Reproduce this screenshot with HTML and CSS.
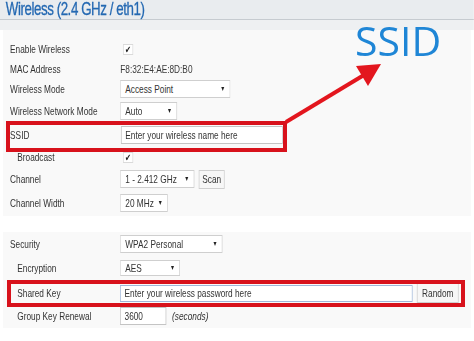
FILE: index.html
```html
<!DOCTYPE html>
<html lang="en">
<head>
    <meta charset="UTF-8">
    <meta name="viewport" content="width=device-width, initial-scale=1.0">
    <title>Wireless Settings</title>
    <link rel="stylesheet" href="styles.css">
</head>
<body>
<div class="page">

    <!-- The router page is shown squeezed sideways, as in the capture -->
    <div class="sheet">
        <h1 class="title">Wireless (2.4 GHz / eth1)</h1>
        <div class="subbar"></div>

        <!-- Basic settings -->
        <section class="panel panel-basic">
            <div class="row r-enable">
                <span class="label">Enable Wireless</span>
                <span class="check">&#10004;</span>
            </div>
            <div class="row r-mac">
                <span class="label">MAC Address</span>
                <span class="value">F8:32:E4:AE:8D:B0</span>
            </div>
            <div class="row r-mode">
                <span class="label">Wireless Mode</span>
                <div class="select w-mode">Access Point<span class="caret">&#9660;</span></div>
            </div>
            <div class="row r-netmode">
                <span class="label">Wireless Network Mode</span>
                <div class="select w-netmode">Auto<span class="caret">&#9660;</span></div>
            </div>
            <div class="row r-ssid">
                <span class="label">SSID</span>
                <input class="field w-ssid" type="text" placeholder="Enter your wireless name here">
            </div>
            <div class="row r-broadcast">
                <span class="label sub">Broadcast</span>
                <span class="check">&#10004;</span>
            </div>
            <div class="row r-channel">
                <span class="label">Channel</span>
                <div class="select w-channel">1 - 2.412 GHz<span class="caret">&#9660;</span></div>
                <button class="btn btn-scan">Scan</button>
            </div>
            <div class="row r-width">
                <span class="label">Channel Width</span>
                <div class="select w-width">20 MHz<span class="caret">&#9660;</span></div>
            </div>
        </section>

        <!-- Security settings -->
        <section class="panel panel-security">
            <div class="row r-security">
                <span class="label">Security</span>
                <div class="select w-security">WPA2 Personal<span class="caret">&#9660;</span></div>
            </div>
            <div class="row r-encryption">
                <span class="label sub">Encryption</span>
                <div class="select w-aes">AES<span class="caret">&#9660;</span></div>
            </div>
            <div class="row r-key">
                <span class="label sub">Shared Key</span>
                <input class="field field-focus w-key" type="text" placeholder="Enter your wireless password here">
                <button class="btn btn-random">Random</button>
            </div>
            <div class="row r-renewal">
                <span class="label sub">Group Key Renewal</span>
                <input class="field w-renewal" type="text" value="3600">
                <span class="unit">(seconds)</span>
            </div>
        </section>
    </div>

    <!-- Annotations drawn over the capture -->
    <div class="mark mark-ssid"></div>
    <div class="mark mark-key"></div>
    <svg class="arrow" width="474" height="341" viewBox="0 0 474 341">
        <line x1="286" y1="122" x2="364" y2="75" stroke="#e3161e" stroke-width="4"/>
        <polygon points="381,64 356,66 368,86" fill="#e3161e"/>
    </svg>
    <div class="callout">SSID</div>

</div>
</body>
</html>
```

FILE: styles.css
```css
body {
    margin: 0;
    background: #ffffff;
    font-family: "Liberation Sans", Arial, sans-serif;
    color: #333;
}
.page {
    position: relative;
    width: 474px;
    height: 341px;
    overflow: hidden;
}
.sheet {
    width: 658px;
    transform: scaleX(0.72);
    transform-origin: 0 0;
}
.title {
    margin: 0;
    height: 20px;
    padding-left: 8px;
    background: #e9ecef;
    border-bottom: 1px solid #c6cbd0;
    box-sizing: border-box;
    color: #2368b2;
    font-size: 18.5px;
    font-weight: normal;
    letter-spacing: -0.6px;
    line-height: 18px;
    -webkit-text-stroke: 0.3px #2368b2;
}
.subbar {
    height: 10px;
    background: #eef0f2;
}
.panel {
    margin-left: 4px;
    width: 650px;
    background: #f9f9f9;
}
.panel-basic {
    padding: 9px 0 1px;
}
.panel-security {
    margin-top: 16px;
    padding: 1px 0 1px;
}
.row {
    display: flex;
    align-items: center;
    font-size: 11.5px;
}
.label {
    width: 153px;
    padding-left: 10px;
    flex-shrink: 0;
}
.label.sub {
    padding-left: 20px;
    width: 143px;
}
.r-enable { height: 20px; }
.r-mac { height: 19px; }
.r-mode { height: 21px; }
.r-netmode { height: 24px; }
.r-ssid { height: 24px; }
.r-broadcast { height: 20px; }
.r-channel { height: 24px; }
.r-width { height: 24px; }
.r-security { height: 22px; }
.r-encryption { height: 26px; }
.r-key { height: 24px; }
.r-renewal { height: 22px; }

.check {
    width: 12px;
    height: 9px;
    margin-left: 4px;
    border: 1px solid #dadada;
    background: #fff;
    font-size: 10px;
    line-height: 9px;
    text-align: center;
    color: #222;
}
.value {
    color: #3a3a3a;
}
.select {
    position: relative;
    height: 18px;
    box-sizing: border-box;
    padding-left: 6px;
    border: 1px solid #cfcfcf;
    background: #fff;
    line-height: 16px;
    color: #333;
}
.caret {
    position: absolute;
    right: 6px;
    top: 0;
    font-size: 7px;
    color: #222;
}
.w-mode { width: 153px; }
.w-netmode { width: 79px; }
.w-channel { width: 103px; }
.w-width { width: 66px; }
.w-security { width: 142px; }
.w-aes { width: 83px; height: 16px; line-height: 14px; }

.field {
    height: 18px;
    box-sizing: border-box;
    padding: 0 5px;
    border: 1px solid #c4c4c4;
    background: #fff;
    font-family: inherit;
    font-size: 11.5px;
    color: #333;
    outline: none;
}
.field::placeholder {
    color: #333;
}
.field-focus {
    border-color: #9fb6d8;
}
.w-ssid { width: 225px; margin-left: 1px; }
.w-key { width: 406px; height: 17px; }
.w-renewal { width: 64px; }

.btn {
    height: 19px;
    padding: 0;
    border: 1px solid #cfcfcf;
    background: #f7f7f7;
    font-family: inherit;
    font-size: 11.5px;
    color: #333;
}
.btn-scan { margin-left: 6px; width: 36px; }
.btn-random { margin-left: 6px; width: 58px; height: 20px; }

.unit {
    margin-left: 8px;
    font-style: italic;
}

.mark {
    position: absolute;
    border: 4px solid #d8121c;
    box-sizing: border-box;
}
.mark-ssid {
    left: 6px;
    top: 121px;
    width: 281px;
    height: 31px;
}
.mark-key {
    left: 7px;
    top: 280px;
    width: 458px;
    height: 27px;
}

.arrow {
    position: absolute;
    left: 0;
    top: 0;
}
.callout {
    position: absolute;
    left: 355px;
    top: 20px;
    font-family: "Open Sans", sans-serif;
    font-size: 41px;
    line-height: 40px;
    color: #1f86d6;
}
```
